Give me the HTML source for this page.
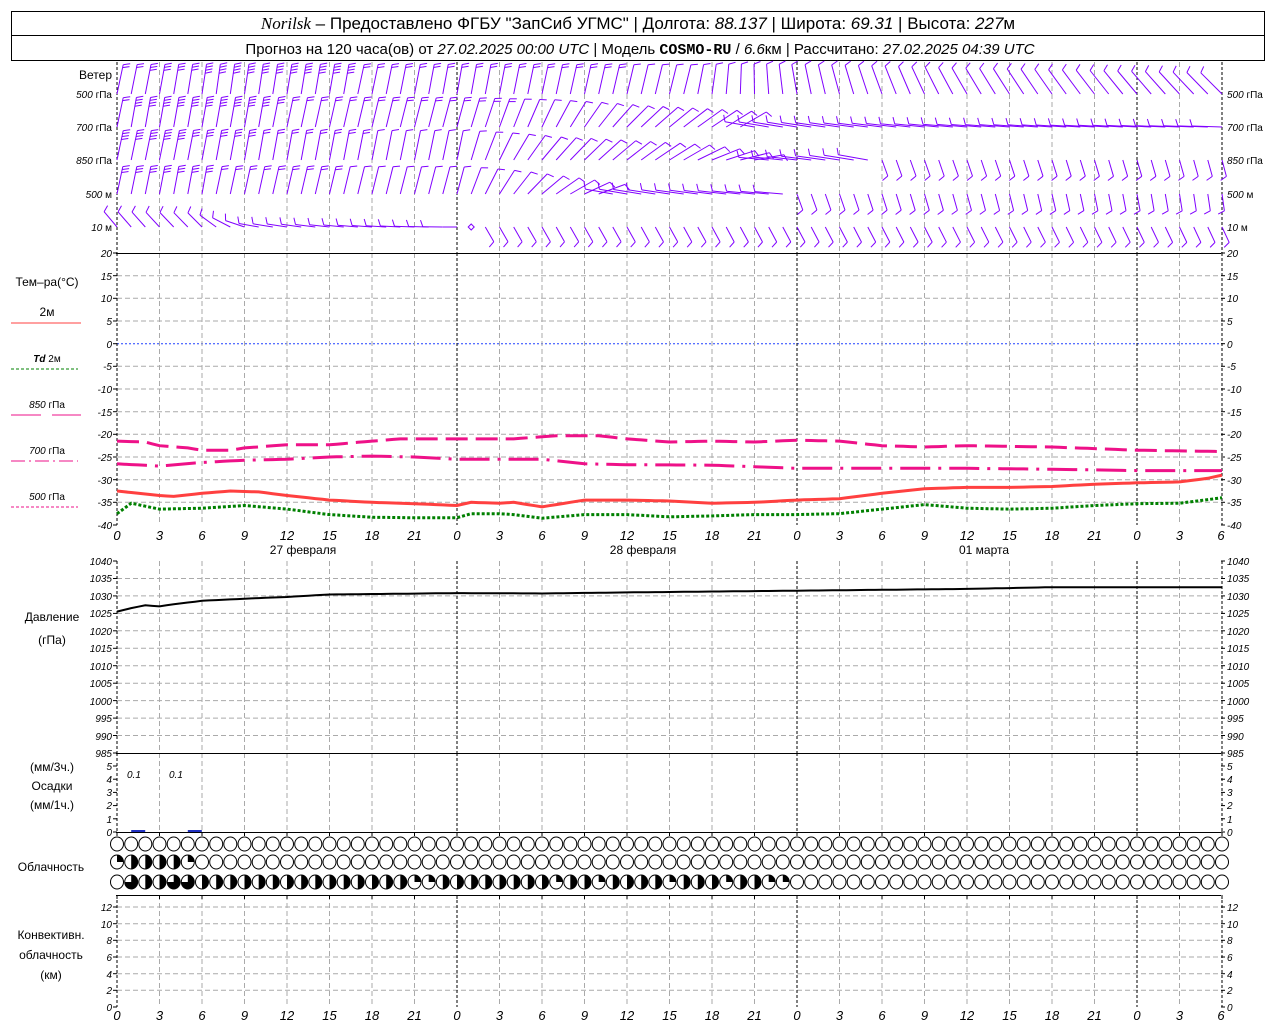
<!DOCTYPE html>
<html><head><meta charset="utf-8">
<style>
html,body{margin:0;padding:0;background:#fff;width:1280px;height:1024px;overflow:hidden}
svg{display:block}
.t{font-family:"Liberation Sans","DejaVu Sans",sans-serif;font-size:12px;fill:#000}
.n{font-family:"Liberation Sans",sans-serif;font-size:10px;font-style:italic;fill:#000}
.nl{text-anchor:end}
.tk{font-family:"Liberation Sans",sans-serif;font-size:13px;font-style:italic;fill:#000;text-anchor:middle}
.c{text-anchor:middle}
</style></head><body>
<svg id="s" width="1280" height="1024" viewBox="0 0 1280 1024" xmlns="http://www.w3.org/2000/svg">
<rect width="1280" height="1024" fill="#fff"/>
<rect x="11.5" y="11.5" width="1253" height="49" fill="none" stroke="#000"/>
<line x1="11" y1="35.5" x2="1265" y2="35.5" stroke="#000"/>
<text x="638" y="29" font-size="17" text-anchor="middle" font-family="Liberation Sans,sans-serif"><tspan font-family="Liberation Serif,serif" font-style="italic">Norilsk</tspan> – Предоставлено ФГБУ "ЗапСиб УГМС" | Долгота: <tspan font-style="italic">88.137</tspan> | Широта: <tspan font-style="italic">69.31</tspan> | Высота: <tspan font-style="italic">227</tspan>м</text>
<text x="640" y="54" font-size="15" text-anchor="middle" font-family="Liberation Sans,sans-serif">Прогноз на 120 часа(ов) от <tspan font-style="italic">27.02.2025 00:00 UTC</tspan>  | Модель <tspan font-family="Liberation Mono,monospace" font-weight="bold">COSMO-RU</tspan> / <tspan font-style="italic">6.6</tspan>км | Рассчитано: <tspan font-style="italic">27.02.2025 04:39 UTC</tspan></text>

<g id="g"></g>

<text class="t" x="112" y="79" text-anchor="end">Ветер</text>
<text class="n nl" x="112" y="98">500 <tspan font-style="normal">гПа</tspan></text>
<text class="n nl" x="112" y="131">700 <tspan font-style="normal">гПа</tspan></text>
<text class="n nl" x="112" y="164">850 <tspan font-style="normal">гПа</tspan></text>
<text class="n nl" x="112" y="198">500 <tspan font-style="normal">м</tspan></text>
<text class="n nl" x="112" y="231">10 <tspan font-style="normal">  м</tspan></text>
<text class="n" x="1227" y="98">500 <tspan font-style="normal">гПа</tspan></text>
<text class="n" x="1227" y="131">700 <tspan font-style="normal">гПа</tspan></text>
<text class="n" x="1227" y="164">850 <tspan font-style="normal">гПа</tspan></text>
<text class="n" x="1227" y="198">500 <tspan font-style="normal">м</tspan></text>
<text class="n" x="1227" y="231">10 <tspan font-style="normal">  м</tspan></text>

<text class="t c" x="47" y="286">Тем–ра(°С)</text>
<text class="t c" x="47" y="316" font-size="10">2м</text>
<line x1="11" y1="323" x2="81" y2="323" stroke="#ff4040"/>
<text class="n c" x="47" y="362"><tspan font-weight="bold">Td</tspan>  <tspan font-style="normal">2м</tspan></text>
<line x1="11" y1="369" x2="78" y2="369" stroke="#008000" stroke-dasharray="3,2"/>
<text class="n c" x="47" y="408">850 <tspan font-style="normal">гПа</tspan></text>
<line x1="11" y1="415" x2="41" y2="415" stroke="#ee1188"/><line x1="52" y1="415" x2="81" y2="415" stroke="#ee1188"/>
<text class="n c" x="47" y="454">700 <tspan font-style="normal">гПа</tspan></text>
<line x1="11" y1="461" x2="78" y2="461" stroke="#ee1188" stroke-dasharray="14,4,2,4"/>
<text class="n c" x="47" y="500">500 <tspan font-style="normal">гПа</tspan></text>
<line x1="11" y1="507" x2="78" y2="507" stroke="#ee1188" stroke-dasharray="3,2"/>

<text x="112" y="257" class="n nl">20</text><text x="112" y="280" class="n nl">15</text><text x="112" y="302" class="n nl">10</text><text x="112" y="325" class="n nl">5</text><text x="112" y="348" class="n nl">0</text><text x="112" y="370" class="n nl">-5</text><text x="112" y="393" class="n nl">-10</text><text x="112" y="416" class="n nl">-15</text><text x="112" y="438" class="n nl">-20</text><text x="112" y="461" class="n nl">-25</text><text x="112" y="484" class="n nl">-30</text><text x="112" y="506" class="n nl">-35</text><text x="112" y="529" class="n nl">-40</text>
<text x="1227" y="257" class="n">20</text><text x="1227" y="280" class="n">15</text><text x="1227" y="302" class="n">10</text><text x="1227" y="325" class="n">5</text><text x="1227" y="348" class="n">0</text><text x="1227" y="370" class="n">-5</text><text x="1227" y="393" class="n">-10</text><text x="1227" y="416" class="n">-15</text><text x="1227" y="438" class="n">-20</text><text x="1227" y="461" class="n">-25</text><text x="1227" y="484" class="n">-30</text><text x="1227" y="506" class="n">-35</text><text x="1227" y="529" class="n">-40</text>

<text class="tk" y="540" x="117">0</text><text class="tk" y="540" x="159.5">3</text><text class="tk" y="540" x="202">6</text><text class="tk" y="540" x="244.5">9</text><text class="tk" y="540" x="287">12</text><text class="tk" y="540" x="329.5">15</text><text class="tk" y="540" x="372">18</text><text class="tk" y="540" x="414.5">21</text><text class="tk" y="540" x="457">0</text><text class="tk" y="540" x="499.5">3</text><text class="tk" y="540" x="542">6</text><text class="tk" y="540" x="584.5">9</text><text class="tk" y="540" x="627">12</text><text class="tk" y="540" x="669.5">15</text><text class="tk" y="540" x="712">18</text><text class="tk" y="540" x="754.5">21</text><text class="tk" y="540" x="797">0</text><text class="tk" y="540" x="839.5">3</text><text class="tk" y="540" x="882">6</text><text class="tk" y="540" x="924.5">9</text><text class="tk" y="540" x="967">12</text><text class="tk" y="540" x="1009.5">15</text><text class="tk" y="540" x="1052">18</text><text class="tk" y="540" x="1094.5">21</text><text class="tk" y="540" x="1137">0</text><text class="tk" y="540" x="1179.5">3</text><text class="tk" y="540" x="1221">6</text>
<text class="t c" x="303" y="554">27 февраля</text>
<text class="t c" x="643" y="554">28 февраля</text>
<text class="t c" x="984" y="554">01 марта</text>

<text class="t c" x="52" y="621">Давление</text>
<text class="t c" x="52" y="644">(гПа)</text>
<text x="112" y="565" class="n nl">1040</text><text x="112" y="582" class="n nl">1035</text><text x="112" y="600" class="n nl">1030</text><text x="112" y="617" class="n nl">1025</text><text x="112" y="635" class="n nl">1020</text><text x="112" y="652" class="n nl">1015</text><text x="112" y="670" class="n nl">1010</text><text x="112" y="687" class="n nl">1005</text><text x="112" y="705" class="n nl">1000</text><text x="112" y="722" class="n nl">995</text><text x="112" y="740" class="n nl">990</text><text x="112" y="757" class="n nl">985</text>
<text x="1227" y="565" class="n">1040</text><text x="1227" y="582" class="n">1035</text><text x="1227" y="600" class="n">1030</text><text x="1227" y="617" class="n">1025</text><text x="1227" y="635" class="n">1020</text><text x="1227" y="652" class="n">1015</text><text x="1227" y="670" class="n">1010</text><text x="1227" y="687" class="n">1005</text><text x="1227" y="705" class="n">1000</text><text x="1227" y="722" class="n">995</text><text x="1227" y="740" class="n">990</text><text x="1227" y="757" class="n">985</text>

<text class="t c" x="52" y="771">(мм/3ч.)</text>
<text class="t c" x="52" y="790">Осадки</text>
<text class="t c" x="52" y="809">(мм/1ч.)</text>
<text x="112" y="770" class="n nl">5</text><text x="112" y="783" class="n nl">4</text><text x="112" y="796" class="n nl">3</text><text x="112" y="809" class="n nl">2</text><text x="112" y="823" class="n nl">1</text><text x="112" y="836" class="n nl">0</text>
<text x="1227" y="770" class="n">5</text><text x="1227" y="783" class="n">4</text><text x="1227" y="796" class="n">3</text><text x="1227" y="809" class="n">2</text><text x="1227" y="823" class="n">1</text><text x="1227" y="836" class="n">0</text>
<text class="n" x="127" y="778" font-size="12">0.1</text>
<text class="n" x="169" y="778" font-size="12">0.1</text>

<text class="t c" x="51" y="871">Облачность</text>

<text class="t c" x="51" y="939">Конвективн.</text>
<text class="t c" x="51" y="959">облачность</text>
<text class="t c" x="51" y="979">(км)</text>
<text x="112" y="911" class="n nl">12</text><text x="112" y="928" class="n nl">10</text><text x="112" y="944" class="n nl">8</text><text x="112" y="961" class="n nl">6</text><text x="112" y="978" class="n nl">4</text><text x="112" y="994" class="n nl">2</text><text x="112" y="1011" class="n nl">0</text>
<text x="1227" y="911" class="n">12</text><text x="1227" y="928" class="n">10</text><text x="1227" y="944" class="n">8</text><text x="1227" y="961" class="n">6</text><text x="1227" y="978" class="n">4</text><text x="1227" y="994" class="n">2</text><text x="1227" y="1011" class="n">0</text>

<text class="tk" y="1020" x="117">0</text><text class="tk" y="1020" x="159.5">3</text><text class="tk" y="1020" x="202">6</text><text class="tk" y="1020" x="244.5">9</text><text class="tk" y="1020" x="287">12</text><text class="tk" y="1020" x="329.5">15</text><text class="tk" y="1020" x="372">18</text><text class="tk" y="1020" x="414.5">21</text><text class="tk" y="1020" x="457">0</text><text class="tk" y="1020" x="499.5">3</text><text class="tk" y="1020" x="542">6</text><text class="tk" y="1020" x="584.5">9</text><text class="tk" y="1020" x="627">12</text><text class="tk" y="1020" x="669.5">15</text><text class="tk" y="1020" x="712">18</text><text class="tk" y="1020" x="754.5">21</text><text class="tk" y="1020" x="797">0</text><text class="tk" y="1020" x="839.5">3</text><text class="tk" y="1020" x="882">6</text><text class="tk" y="1020" x="924.5">9</text><text class="tk" y="1020" x="967">12</text><text class="tk" y="1020" x="1009.5">15</text><text class="tk" y="1020" x="1052">18</text><text class="tk" y="1020" x="1094.5">21</text><text class="tk" y="1020" x="1137">0</text><text class="tk" y="1020" x="1179.5">3</text><text class="tk" y="1020" x="1221">6</text>
</svg>
<script>
(function(){
var G=document.getElementById("g"),out="";
function X(h){return 117+h*340/24;}
function f1(v){return (+v).toFixed(1);}
function L(x1,y1,x2,y2,a){out+='<line x1="'+f1(x1)+'" y1="'+f1(y1)+'" x2="'+f1(x2)+'" y2="'+f1(y2)+'" '+(a||'stroke="#000"')+'/>';}
function ip(k,h){for(var i=0;i<k.length-1;i++){if(h>=k[i][0]&&h<=k[i+1][0]){var t=(h-k[i][0])/(k[i+1][0]-k[i][0]);return k[i][1]+(k[i+1][1]-k[i][1])*t;}}return k[k.length-1][1];}
var panels=[[62,253],[253,525],[561,753],[753,832],[895,1007]];
var gd='stroke="#aaa" stroke-dasharray="5,3"';
for(var T=15;T>=-35;T-=5){var y=253+(20-T)*272/60;L(117,y,1221,y,T==0?'stroke="#2040ff" stroke-dasharray="2,2"':gd);}
for(var p=1035;p>985;p-=5){var y=561+(1040-p)*192/55;L(117,y,1221,y,gd);}
for(var k=2;k<=12;k+=2){var y=1007-k*100/12;L(117,y,1221,y,gd);}
for(var h=0;h<=78;h+=3){var x=X(h),blk=(h%24==0)||h==78;
 for(var j=0;j<panels.length;j++){L(x,panels[j][0],x,panels[j][1],blk?'stroke="#000" stroke-dasharray="3,2"':gd);}
 L(x,832,x,836);L(x,895,x,899);}
function tk(y){L(113,y,117,y);L(1221,y,1225,y);}
for(var T=20;T>=-40;T-=5)tk(253+(20-T)*272/60);
for(var p=1040;p>=985;p-=5)tk(561+(1040-p)*192/55);
for(var k=0;k<=5;k++)tk(832-k*13.2);
for(var k=0;k<=12;k+=2)tk(1007-k*100/12);
[253,753,832,895].forEach(function(y){L(116,y+.5,1221,y+.5);});
function TY(t){return 253+(20-t)*272/60;}
function curve(k,attr){var s="";for(var h=0;h<=78;h+=0.5){s+=(h?"L":"M")+f1(X(h))+","+f1(TY(ip(k,h)));}out+='<path d="'+s+'" fill="none" '+attr+'/>';}
curve([[0,-21.5],[2,-21.7],[3,-22.5],[5,-23],[6,-23.5],[8,-23.5],[9,-23],[12,-22.3],[15,-22.3],[18,-21.5],[20,-21],[24,-21],[28,-21],[31,-20.3],[34,-20.3],[36,-21],[39,-21.7],[42,-21.5],[45,-21.7],[48,-21.3],[51,-21.5],[54,-22.5],[57,-22.8],[60,-22.5],[66,-22.8],[72,-23.5],[78,-23.8]],'stroke="#ee1188" stroke-width="3" stroke-dasharray="22,8"');
curve([[0,-26.5],[3,-27],[6,-26.2],[9,-25.7],[12,-25.5],[15,-25],[18,-24.8],[21,-25],[24,-25.5],[30,-25.5],[33,-26.5],[36,-26.7],[42,-26.8],[48,-27.5],[54,-27.5],[60,-27.5],[66,-27.7],[72,-28],[78,-28]],'stroke="#ee1188" stroke-width="3" stroke-dasharray="30,8,3,8"');
curve([[0,-32.5],[3,-33.5],[4,-33.7],[6,-33],[8,-32.5],[10,-32.7],[12,-33.5],[15,-34.5],[18,-35],[21,-35.3],[24,-35.7],[25,-35],[27,-35.2],[28,-35],[30,-36],[33,-34.5],[36,-34.5],[39,-34.7],[42,-35.2],[45,-35],[48,-34.5],[51,-34.2],[54,-33],[57,-32],[60,-31.7],[63,-31.7],[66,-31.5],[69,-31],[72,-30.7],[75,-30.5],[77,-29.7],[78,-29]],'stroke="#ff4040" stroke-width="3"');
curve([[0,-37.5],[1,-35.2],[3,-36.5],[6,-36.3],[9,-35.7],[12,-36.5],[15,-37.7],[18,-38.3],[21,-38.4],[24,-38.4],[25,-37.5],[27,-37.5],[28,-37.7],[30,-38.5],[33,-37.7],[36,-37.7],[39,-38.2],[42,-38],[45,-37.7],[48,-37.7],[51,-37.5],[54,-36.5],[57,-35.5],[60,-36.3],[63,-36.5],[66,-36.3],[69,-35.7],[72,-35.3],[75,-35.2],[78,-34]],'stroke="#008000" stroke-width="3" stroke-dasharray="3,2"');
var pk=[[0,1025.5],[1,1026.5],[2,1027.3],[3,1027],[4,1027.6],[6,1028.6],[9,1029.2],[12,1029.7],[15,1030.4],[24,1030.8],[30,1030.7],[36,1031],[48,1031.5],[60,1032],[66,1032.5],[78,1032.5]];
var s="";for(var h=0;h<=78;h+=0.5){s+=(h?"L":"M")+f1(X(h))+","+f1(561+(1040-ip(pk,h))*192/55);}
out+='<path d="'+s+'" fill="none" stroke="#000" stroke-width="2"/>';
out+='<rect x="'+f1(X(1))+'" y="830" width="14" height="2" fill="#2030c0"/><rect x="'+f1(X(5))+'" y="830" width="14" height="2" fill="#2030c0"/>';
var C='stroke="#8000ff"';
var rows=[
 [94,30,[[0,12,2],[7,8,4],[16,10,4],[17,12,2],[24,10,2],[30,12,2],[40,14,1],[48,-10,1],[60,-30,1],[78,-45,1]]],
 [127,30,[[0,12,2],[1,10,4],[10,10,4],[12,12,2],[24,15,2],[30,25,1],[36,45,1],[44,60,1],[45,-80,1],[60,-85,1],[78,-88,1]]],
 [160,30,[[0,12,4],[9,10,3],[10,10,2],[24,12,1],[30,40,1],[40,60,1],[45,80,1],[46,-85,1],[53,-80,1],[54,160,1],[78,165,1]]],
 [194,28,[[0,12,3],[6,10,3],[7,12,2],[24,15,1],[30,50,1],[34,70,1],[35,-80,1],[47,-85,1],[48,160,1],[78,172,1]]],
 [227,20,[[0,-40,1],[6,-45,1],[10,-80,1],[24,-90,1],[26,150,1],[78,155,1]]]
];
rows.forEach(function(r){var y0=r[0],len0=r[1],k=r[2];
 var kn=k.map(function(q){return [q[0],q[2]];});
 for(var h=0;h<=78;h++){
  if(y0==227&&(h==24||h==25)){if(h==25){out+='<path d="M'+f1(X(25))+','+(y0-3)+'l3,3l-3,3l-3,-3z" fill="none" '+C+'/>';}else{L(X(23),y0,X(24),y0,C);}continue;}
  var ad=ip(k,h),a=ad*Math.PI/180,n=Math.round(ip(kn,h));
  var len=Math.abs(ad)>100?17:len0;
  var x=X(h),dx=Math.sin(a),dy=-Math.cos(a),tx=x+dx*len,ty=y0+dy*len;
  L(x,y0,tx,ty,C);
  var b=a+70*Math.PI/180,bx=Math.sin(b)*7,by=-Math.cos(b)*7;
  for(var i=0;i<n;i++){var px=tx-dx*i*3,py=ty-dy*i*3;L(px,py,px+bx,py+by,C);}
 }});
var r2=[.25,.5,.5,.5,.5,.25];
var r3=[0,.75,.5,.5,.75,.75,.5,.5,.5,.5,.5,.5,.5,.5,.5,.5,.5,.5,.5,.5,.5,.25,.25,.5,.5,.5,.5,.5,.5,.5,.5,.25,.5,.5,.25,.5,.5,.5,.5,.25,.5,.5,.5,.25,.5,.5,.25,.25];
function pie(cx,cy,f){if(f<=0)return;var rx=6.5,ry=7;
 var e=f*2*Math.PI,ex=cx+rx*Math.sin(e),ey=cy-ry*Math.cos(e);
 out+='<path d="M'+f1(cx)+','+cy+'L'+f1(cx)+','+(cy-ry)+'A'+rx+','+ry+' 0 '+(f>.5?1:0)+' 1 '+f1(ex)+','+f1(ey)+'Z" fill="#000"/>';}
var cys=[844,862,882];
for(var h=0;h<=78;h++){var x=X(h);
 for(var ri=0;ri<3;ri++){var cy=cys[ri];
  var f=ri==1?(r2[h]||0):ri==2?(r3[h]||0):0;
  pie(x,cy,f);
  out+='<ellipse cx="'+f1(x)+'" cy="'+cy+'" rx="6.5" ry="7" fill="none" stroke="#000"/>';
 }}
try{G.innerHTML=out;}catch(e){var d=new DOMParser().parseFromString('<svg xmlns="http://www.w3.org/2000/svg">'+out+'</svg>','image/svg+xml');var ch=d.documentElement.childNodes;for(var i=0;i<ch.length;i++)G.appendChild(document.importNode(ch[i],true));}
})();
</script>
</body></html>
